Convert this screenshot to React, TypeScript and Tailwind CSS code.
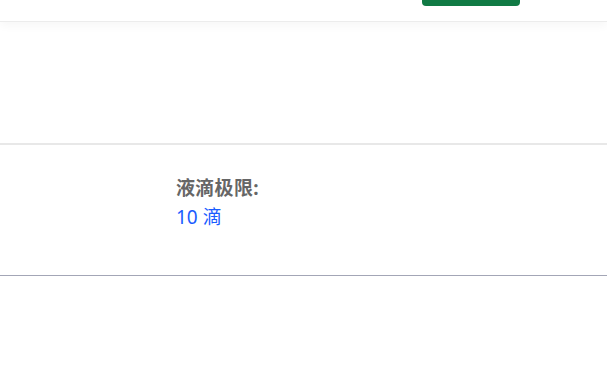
export default function App() {
  return (
    <div className="w-[607px] h-[367px] bg-white overflow-hidden relative" style={{ fontFamily: '"Noto Sans", "Noto Sans CJK SC", sans-serif' }}>
      <div className="h-[22px] border-b border-[#ececec] shadow-[0_4px_10px_rgba(0,0,0,0.035)] relative">
        <div className="absolute left-[422px] top-0 w-[98px] h-[6px] bg-[#107a44] rounded-b-[4px]" />
      </div>
      <div className="h-[121px]" />
      <div className="h-[2px] bg-[#e8e8e8]" />
      <div className="h-[130px] pl-[176px] pt-[29px]">
        <div className="text-[19px] leading-[29px] font-bold text-[#666666] tracking-[0.3px]">液滴极限:</div>
        <div className="text-[19px] leading-[29px] text-[#1a5cff]">10 滴</div>
      </div>
      <div className="h-px bg-[#a3a6b6]" />
    </div>
  );
}
